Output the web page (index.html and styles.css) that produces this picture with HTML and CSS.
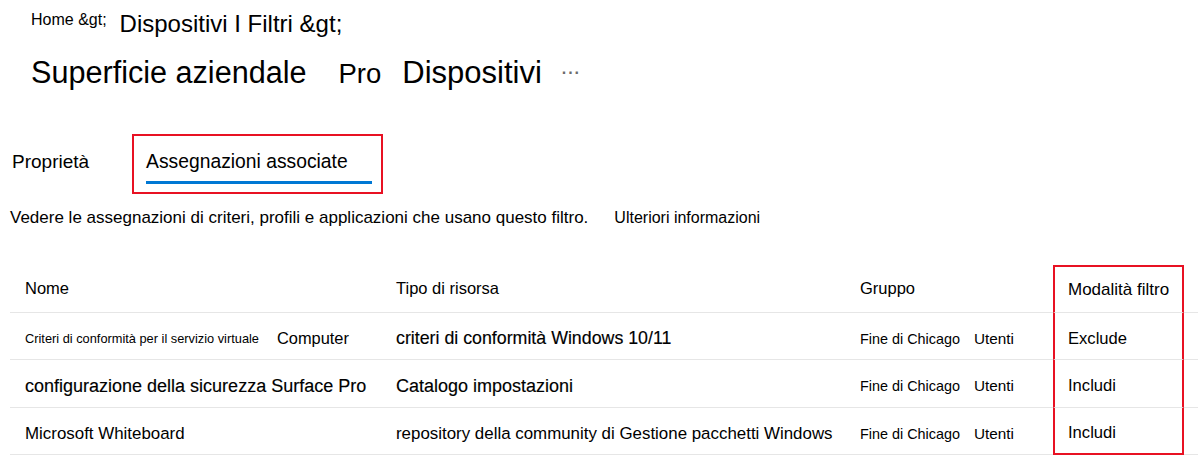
FILE: index.html
```html
<!DOCTYPE html>
<html lang="it">
<head>
    <meta charset="UTF-8">
    <meta name="viewport" content="width=device-width, initial-scale=1.0">
    <title>Filtri - Assegnazioni associate</title>
    <link rel="stylesheet" href="styles.css">
</head>
<body>

<div class="page">
    <nav class="crumbs">
        <span class="crumb-home">Home &amp;gt;</span>
        <span class="crumb-path">Dispositivi I Filtri &amp;gt;</span>
    </nav>

    <div class="title-row">
        <h1 class="title">Superficie aziendale</h1>
        <span class="title-pro">Pro</span>
        <span class="title-devices">Dispositivi</span>
        <span class="more">&middot;&middot;&middot;</span>
    </div>

    <div class="tabs">
        <span class="tab">Proprietà</span>
        <div class="tab-box">
            <span class="tab-active">Assegnazioni associate</span>
        </div>
    </div>

    <p class="intro">
        <span>Vedere le assegnazioni di criteri, profili e applicazioni che usano questo filtro.</span>
        <span class="more-link">Ulteriori informazioni</span>
    </p>

    <div class="grid">
        <div class="cell head">Nome</div>
        <div class="cell head">Tipo di risorsa</div>
        <div class="cell head">Gruppo</div>
        <div class="cell head mode mode-top">Modalità filtro</div>
        <div class="cell"></div>

        <div class="cell row">
            <span class="name-small">Criteri di conformità per il servizio virtuale</span>
            <span class="name-kind">Computer</span>
        </div>
        <div class="cell row strong">criteri di conformità Windows 10/11</div>
        <div class="cell row">
            <span class="group">Fine di Chicago</span>
            <span class="group-users">Utenti</span>
        </div>
        <div class="cell row mode">Exclude</div>
        <div class="cell"></div>

        <div class="cell row strong large">configurazione della sicurezza Surface Pro</div>
        <div class="cell row strong large">Catalogo impostazioni</div>
        <div class="cell row">
            <span class="group">Fine di Chicago</span>
            <span class="group-users">Utenti</span>
        </div>
        <div class="cell row mode">Includi</div>
        <div class="cell"></div>

        <div class="cell row plain">Microsoft Whiteboard</div>
        <div class="cell row plain">repository della community di Gestione pacchetti Windows</div>
        <div class="cell row">
            <span class="group">Fine di Chicago</span>
            <span class="group-users">Utenti</span>
        </div>
        <div class="cell row mode mode-bottom">Includi</div>
        <div class="cell"></div>
    </div>
</div>

</body>
</html>
```

FILE: styles.css
```css
* {
    margin: 0;
    padding: 0;
    box-sizing: border-box;
}

body {
    font-family: "Liberation Sans", Arial, sans-serif;
    color: #000;
    background-color: #fff;
}

.crumbs {
    display: flex;
    align-items: flex-start;
    padding: 10px 0 0 31px;
}

.crumb-home {
    font-size: 16px;
    line-height: 20px;
}

.crumb-path {
    font-size: 24px;
    line-height: 28px;
    margin-left: 13px;
}

.title-row {
    display: flex;
    align-items: baseline;
    height: 38px;
    margin-top: 15px;
    padding-left: 31px;
}

.title {
    font-size: 30.6px;
    font-weight: normal;
    line-height: 38px;
}

.title-pro {
    font-size: 27.5px;
    margin-left: 32px;
}

.title-devices {
    font-size: 31px;
    margin-left: 21px;
}

.more {
    align-self: center;
    margin: 2px 0 0 20px;
    font-size: 16px;
    font-weight: bold;
    letter-spacing: 1px;
    color: #6b6b6b;
}

.tabs {
    display: flex;
    align-items: baseline;
    margin-top: 43px;
    padding-left: 12px;
}

.tab {
    font-size: 19px;
}

.tab-box {
    margin-left: 43px;
    border: 2px solid #e81123;
    padding: 15px 9px 8px 12px;
}

.tab-active {
    display: block;
    font-size: 19.3px;
    line-height: 22px;
    padding: 0 24px 8px 0;
    border-bottom: 3px solid #0078d4;
}

.intro {
    display: flex;
    margin: 14px 0 0 10px;
    font-size: 17px;
    line-height: 20px;
}

.more-link {
    margin-left: 26px;
    font-size: 16px;
}

.grid {
    display: grid;
    grid-template-columns: 371px 464px 208px 131px 14px;
    grid-template-rows: 48px 47px 48px 47px;
    margin: 37px 0 0 10px;
}

.cell {
    display: flex;
    align-items: center;
    padding-left: 15px;
    border-bottom: 1px solid #e6e6e6;
    white-space: nowrap;
}

.row {
    padding-top: 5px;
}

.head {
    font-size: 16.5px;
}

.name-small {
    font-size: 12.8px;
}

.name-kind {
    margin-left: 18px;
    font-size: 16.4px;
}

.strong {
    font-size: 17.8px;
    -webkit-text-stroke: 0.15px #000;
}

.strong.large {
    font-size: 18px;
}

.plain {
    font-size: 16.9px;
}

.group {
    font-size: 14.4px;
}

.group-users {
    margin-left: 14px;
    font-size: 15.3px;
}

.mode {
    padding-left: 13px;
    font-size: 16.6px;
    border-left: 2px solid #e81123;
    border-right: 2px solid #e81123;
}

.mode.head {
    font-size: 17px;
}

.mode-top {
    border-top: 2px solid #e81123;
}

.mode-bottom {
    border-bottom: 2px solid #e81123;
}
```
